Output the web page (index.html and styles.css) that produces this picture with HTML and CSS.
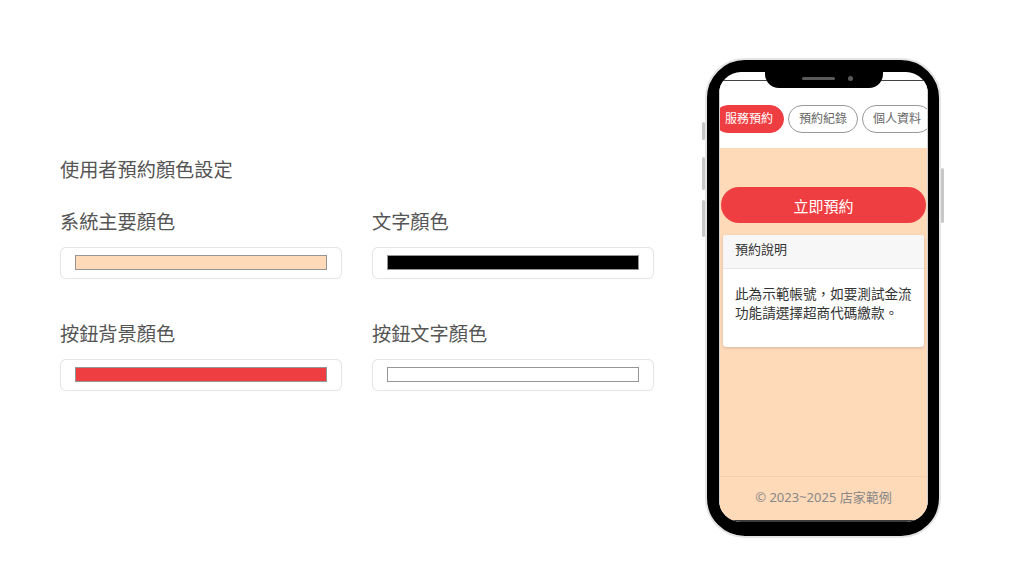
FILE: index.html
```html
<!DOCTYPE html>
<html lang="zh-Hant">
<head>
<meta charset="utf-8">
<title>使用者預約顏色設定</title>
<link rel="stylesheet" href="styles.css">
</head>
<body>
<div class="page">
  <section class="settings">
    <h2 class="title">使用者預約顏色設定</h2>
    <div class="grid">
      <div class="field">
        <div class="label">系統主要顏色</div>
        <div class="picker"><span class="swatch swatch-peach"></span></div>
      </div>
      <div class="field">
        <div class="label">文字顏色</div>
        <div class="picker"><span class="swatch swatch-black"></span></div>
      </div>
      <div class="field">
        <div class="label">按鈕背景顏色</div>
        <div class="picker"><span class="swatch swatch-red"></span></div>
      </div>
      <div class="field">
        <div class="label">按鈕文字顏色</div>
        <div class="picker"><span class="swatch swatch-white"></span></div>
      </div>
    </div>
  </section>

  <div class="phone">
    <span class="side side-l1"></span>
    <span class="side side-l2"></span>
    <span class="side side-l3"></span>
    <span class="side side-r1"></span>
    <div class="notch"><span class="speaker"></span><span class="camera"></span></div>
    <div class="screen">
      <div class="frame">
        <div class="tabs">
          <span class="tab tab-active">服務預約</span>
          <span class="tab">預約紀錄</span>
          <span class="tab">個人資料</span>
        </div>
        <main class="content">
          <button class="book">立即預約</button>
          <div class="card">
            <div class="card-head">預約說明</div>
            <div class="card-body">此為示範帳號，如要測試金流功能請選擇超商代碼繳款。</div>
          </div>
        </main>
        <footer class="foot">© 2023~2025 店家範例</footer>
      </div>
    </div>
  </div>
</div>
</body>
</html>
```

FILE: styles.css
```css
* { box-sizing: border-box; }
html, body { margin: 0; padding: 0; background: #fff; }
body {
  font-family: "Noto Sans", "Noto Sans CJK TC", sans-serif;
  color: #555;
}
.page {
  display: flex;
  align-items: flex-start;
  padding-left: 60px;
  width: 1024px;
  height: 576px;
  overflow: hidden;
}
.settings {
  width: 594px;
  margin-top: 156px;
}
.title {
  margin: 0;
  font-size: 19.2px;
  font-weight: 400;
  line-height: 28px;
  color: #555;
}
.grid {
  margin-top: 24px;
  display: grid;
  grid-template-columns: 282px 282px;
  column-gap: 30px;
  row-gap: 41px;
}
.label {
  font-size: 19.2px;
  line-height: 28px;
  color: #555;
}
.picker {
  margin-top: 11px;
  height: 32px;
  border: 1.5px solid #e6e6e6;
  border-radius: 6px;
  background: #fff;
  padding: 7px 14px;
  display: flex;
  box-shadow: 0 0 1px rgba(0,0,0,0.08);
}
.swatch {
  flex: 1;
  height: 15px;
  border: 1px solid #959595;
}
.swatch-peach { background: #ffdab9; }
.swatch-black { background: #000; }
.swatch-red { background: #ef3e42; }
.swatch-white { background: #fff; }

/* phone */
.phone {
  position: relative;
  margin-top: 58px;
  margin-left: 51px;
  width: 236px;
  height: 480px;
  border: 2px solid #e4e4e4;
  border-radius: 40px;
  background: #000;
  padding: 12px 11px 14px 12px;
}
.side {
  position: absolute;
  width: 3px;
  background: #c8c8c8;
  border-radius: 2px;
}
.side-l1 { left: -5px; top: 62px; height: 18px; }
.side-l2 { left: -5px; top: 97px; height: 33px; }
.side-l3 { left: -5px; top: 140px; height: 37px; }
.side-r1 { right: -5px; top: 108px; height: 55px; }
.notch {
  position: absolute;
  top: 0;
  left: 58px;
  width: 118px;
  height: 28px;
  background: #000;
  border-radius: 0 0 14px 14px;
  z-index: 2;
  display: flex;
  align-items: center;
  justify-content: center;
  gap: 13px;
  padding-top: 8px;
  padding-left: 6px;
}
.speaker {
  width: 33px;
  height: 3px;
  border-radius: 2px;
  background: #5a5a5a;
}
.camera {
  width: 5px;
  height: 5px;
  border-radius: 50%;
  background: #5a5a5a;
}
.screen {
  height: 100%;
  background: #fff;
  border-radius: 22px;
  overflow: hidden;
  padding-top: 8px;
  display: flex;
  flex-direction: column;
}
.frame {
  flex: 1;
  display: flex;
  flex-direction: column;
  border-top: 1px solid #444;
  border-bottom: 2px solid #3a3a3a;
  border-left: 1px solid #d0d0d0;
  border-right: 1px solid #d0d0d0;
  overflow: hidden;
}
.tabs {
  display: flex;
  gap: 4px;
  padding: 24px 0 15px 0;
  margin-left: -6px;
  white-space: nowrap;
  background: #fff;
}
.tab {
  flex: none;
  display: inline-block;
  height: 28px;
  line-height: 26px;
  padding: 0 10px;
  border: 1px solid #999;
  border-radius: 14px;
  font-size: 12px;
  color: #666;
  background: #fff;
}
.tab-active {
  background: #ef3e42;
  border-color: #ef3e42;
  color: #fff;
}
.content {
  flex: 1;
  background: #ffdab9;
  padding: 39px 1px 0 1px;
}
.book {
  display: block;
  width: 100%;
  height: 36px;
  border: none;
  border-radius: 18px;
  background: #ef3e42;
  color: #fff;
  font-family: "Noto Sans", "Noto Sans CJK TC", sans-serif;
  font-size: 15px;
  padding: 0;
}
.card {
  margin: 12px 2px 0 2px;
  background: #fff;
  border-radius: 3px;
  box-shadow: 0 1px 3px rgba(0,0,0,0.18);
  overflow: hidden;
}
.card-head {
  height: 34px;
  line-height: 28px;
  padding: 0 12px;
  background: #f7f7f7;
  border-bottom: 1px solid #e6e6e6;
  font-size: 13px;
  color: #333;
}
.card-body {
  padding: 16px 12px 25px 12px;
  font-size: 13.6px;
  line-height: 18.5px;
  color: #333;
}
.foot {
  height: 44px;
  flex: none;
  background: #ffdab9;
  border-top: 1px solid #f1cfb1;
  text-align: center;
  font-size: 13px;
  line-height: 40px;
  color: #888;
}
```
